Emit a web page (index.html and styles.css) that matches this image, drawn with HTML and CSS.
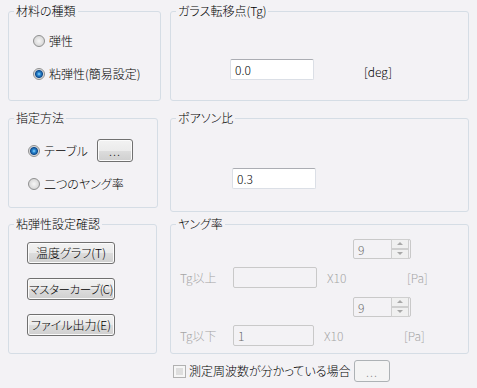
FILE: index.html
```html
<!DOCTYPE html>
<html lang="ja">
<head>
    <meta charset="UTF-8">
    <title>粘弾性設定</title>
    <link rel="stylesheet" href="styles.css">
</head>
<body>
    <div class="page">
        <fieldset class="group g-type">
            <legend>材料の種類</legend>
            <div class="radio-list">
                <label class="option"><span class="radio"></span>弾性</label>
                <label class="option"><span class="radio on"></span>粘弾性(簡易設定)</label>
            </div>
        </fieldset>

        <fieldset class="group g-tg">
            <legend>ガラス転移点(Tg)</legend>
            <div class="field-row tg-row">
                <input class="text" type="text" value="0.0">
                <span class="unit">[deg]</span>
            </div>
        </fieldset>

        <fieldset class="group g-method">
            <legend>指定方法</legend>
            <div class="method-list">
                <div class="method-row">
                    <label class="option method-opt"><span class="radio on"></span>テーブル</label>
                    <button class="btn btn-dots">...</button>
                </div>
                <label class="option"><span class="radio"></span>二つのヤング率</label>
            </div>
        </fieldset>

        <fieldset class="group g-poisson">
            <legend>ポアソン比</legend>
            <div class="field-row poisson-row">
                <input class="text" type="text" value="0.3">
            </div>
        </fieldset>

        <fieldset class="group g-check">
            <legend>粘弾性設定確認</legend>
            <div class="btn-list">
                <button class="btn btn-wide">温度グラフ(T)</button>
                <button class="btn btn-wide tight">マスターカーブ(C)</button>
                <button class="btn btn-wide">ファイル出力(E)</button>
            </div>
        </fieldset>

        <fieldset class="group g-young">
            <legend>ヤング率</legend>
            <div class="young">
                <div class="spin-row">
                    <div class="spin"><span class="spin-val">9</span><span class="spin-btns"><span class="spin-up"></span><span class="spin-down"></span></span></div>
                </div>
                <div class="young-row">
                    <span class="dim young-label">Tg以上</span>
                    <input class="text off" type="text" value="" disabled>
                    <span class="dim x10">X10</span>
                    <span class="dim">[Pa]</span>
                </div>
                <div class="spin-row">
                    <div class="spin"><span class="spin-val">9</span><span class="spin-btns"><span class="spin-up"></span><span class="spin-down"></span></span></div>
                </div>
                <div class="young-row">
                    <span class="dim young-label">Tg以下</span>
                    <input class="text off short" type="text" value="1" disabled>
                    <span class="dim x10">X10</span>
                    <span class="dim">[Pa]</span>
                </div>
            </div>
        </fieldset>
    </div>

    <div class="footer">
        <label class="option"><span class="check"></span>測定周波数が分かっている場合</label>
        <button class="btn btn-dots off" disabled>...</button>
    </div>
</body>
</html>
```

FILE: styles.css
```css
body {
    margin: 0;
    background-color: #f3f2f5;
    font-family: "Noto Sans CJK JP", "Liberation Sans", sans-serif;
    font-size: 12px;
    font-weight: 300;
    font-feature-settings: "palt";
    color: #000;
}
.page {
    display: grid;
    grid-template-columns: 153px 299px;
    grid-template-rows: 107px 106px 137px;
    column-gap: 9px;
    padding: 4px 8px 0;
    align-items: start;
}
.group {
    margin: 0;
    padding: 0;
    min-width: 0;
    box-sizing: border-box;
    border: 1px solid #d5dde5;
    border-radius: 3px;
}
.group legend {
    margin-left: 5px;
    padding: 0 2px;
    line-height: 14px;
}
.g-type, .g-tg { height: 97px; }
.g-method { height: 97px; width: 150px; }
.g-poisson { height: 101px; }
.g-check { height: 137px; width: 149px; }
.g-young { height: 137px; }

.option {
    display: flex;
    align-items: center;
    gap: 4px;
    line-height: 14px;
    white-space: nowrap;
}
.radio {
    flex: none;
    width: 12px;
    height: 12px;
    box-sizing: border-box;
    border: 1px solid #8e8f8f;
    border-radius: 50%;
    background: radial-gradient(circle, #f6f6f6 0, #e4e4e4 3px, #d2d2d2 6px);
}
.radio.on {
    background: radial-gradient(circle, #9bdcff 0, #2f8fd8 1.5px, #0f4c8e 3.5px, #d9d9d9 4.5px, #f2f2f2 6px);
}
.check {
    flex: none;
    width: 13px;
    height: 13px;
    box-sizing: border-box;
    border: 1px solid #b1b1b1;
    background-color: #dedede;
    box-shadow: inset 0 0 0 2px #f6f6f6;
}

.radio-list {
    display: flex;
    flex-direction: column;
    gap: 19px;
    padding: 16px 0 0 24px;
}
.method-list {
    display: flex;
    flex-direction: column;
    gap: 15px;
    padding: 14px 0 0 19px;
}
.method-row {
    display: flex;
    align-items: center;
}
.method-opt { width: 69px; }

.field-row {
    display: flex;
    align-items: center;
}
.tg-row { padding: 41px 0 0 59px; }
.poisson-row { padding: 43px 0 0 61px; }
.unit {
    margin-left: 50px;
    padding-top: 3px;
}

.text {
    width: 84px;
    height: 21px;
    box-sizing: border-box;
    margin: 0;
    padding: 0 4px;
    border: 1px solid #dbdfe6;
    border-top-color: #abadb3;
    border-radius: 2px;
    background-color: #fff;
    font-family: inherit;
    font-size: 12px;
    font-weight: inherit;
    color: #000;
    outline: none;
}
.text.off {
    background-color: #f3f2f5;
    border-color: #c9c9c9;
    color: #6d6d6d;
}
.text.short { width: 81px; }

.btn {
    height: 22px;
    box-sizing: border-box;
    margin: 0;
    padding: 0;
    border: 1px solid #707070;
    border-radius: 3px;
    background: linear-gradient(#f2f2f2 0%, #ebebeb 50%, #dddddd 50%, #cfcfcf 100%);
    box-shadow: inset 0 0 0 1px #fbfbfb;
    font-family: inherit;
    font-size: 12px;
    font-weight: inherit;
    font-feature-settings: "palt";
    color: #000;
    line-height: 18px;
    white-space: nowrap;
}
.btn-dots {
    width: 36px;
    height: 23px;
    line-height: 22px;
    letter-spacing: 1px;
}
.btn-wide { width: 88px; }
.btn-wide.tight {
    font-size: 11.5px;
    letter-spacing: -0.4px;
}
.btn.off {
    height: 22px;
    border-color: #adb2b5;
    background: #f4f4f4;
    box-shadow: none;
    color: #838383;
}
.btn-list {
    display: flex;
    flex-direction: column;
    gap: 14px;
    padding: 11px 0 0 18px;
}

.young {
    display: flex;
    flex-direction: column;
    padding: 8px 0 0 9px;
}
.spin-row { padding-left: 173px; }
.young-row {
    display: flex;
    align-items: center;
    margin: 8px 0 9px;
}
.young-row:last-child { margin-bottom: 0; }
.young-label { width: 53px; }
.dim { color: #a6a6a6; line-height: 14px; }
.x10 {
    width: 80px;
    margin-left: 10px;
}
.spin {
    display: flex;
    align-items: center;
    justify-content: space-between;
    width: 58px;
    height: 20px;
    box-sizing: border-box;
    border: 1px solid #c9c9c9;
    border-radius: 2px;
    padding: 0 1px 0 4px;
}
.spin-val { color: #6d6d6d; }
.spin-btns {
    display: flex;
    flex-direction: column;
}
.spin-up, .spin-down {
    position: relative;
    width: 16px;
    height: 8px;
    border: 1px solid #cfcfcf;
    background-color: #f0f0f0;
}
.spin-up::after, .spin-down::after {
    content: "";
    position: absolute;
    left: 5px;
    top: 2px;
    border-left: 3px solid transparent;
    border-right: 3px solid transparent;
}
.spin-up::after { border-bottom: 3px solid #a8a8a8; }
.spin-down::after { border-top: 3px solid #a8a8a8; }

.footer {
    display: flex;
    align-items: center;
    padding: 6px 0 0 173px;
}
.footer .option { width: 181px; gap: 3px; }
```
